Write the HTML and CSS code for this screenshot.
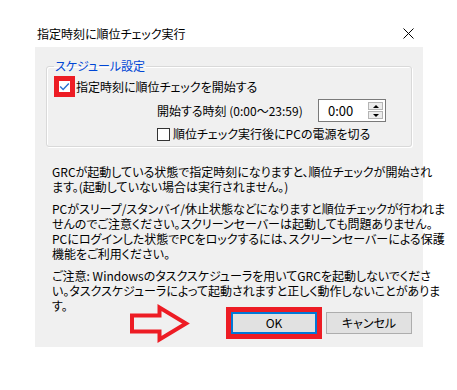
FILE: index.html
```html
<!DOCTYPE html>
<html lang="ja">
<head>
<meta charset="utf-8">
<title>指定時刻に順位チェック実行</title>
<link rel="stylesheet" href="styles.css">
</head>
<body>
<div class="window">
  <div class="titlebar">
    <span class="title">指定時刻に順位チェック実行</span>
    <svg class="close" viewBox="0 0 11 11" width="11" height="11"><path d="M0.5 0.5 L10.5 10.5 M10.5 0.5 L0.5 10.5" stroke="#000" stroke-width="1" fill="none"/></svg>
  </div>
  <div class="client">
    <fieldset class="group">
      <legend>スケジュール設定</legend>
      <div class="row r1">
        <span class="hl"><svg class="check" viewBox="0 0 11 11" width="11" height="11"><path d="M1.2 5.6 L4.1 8.4 L9.8 2.4" stroke="#2b6fd1" stroke-width="1.4" fill="none"/></svg></span>
        <span class="lbl">指定時刻に順位チェックを開始する</span>
      </div>
      <div class="row r2">
        <span class="time-lbl">開始する時刻 (0:00～23:59)</span>
        <div class="spin">
          <span class="val">0:00</span>
          <div class="spinbtns">
            <span class="sb"><span class="tri up"></span></span>
            <span class="sb"><span class="tri down"></span></span>
          </div>
        </div>
      </div>
      <div class="row r3">
        <span class="cb"></span>
        <span class="lbl">順位チェック実行後にPCの電源を切る</span>
      </div>
    </fieldset>
    <div class="notes">
      <p>GRCが起動している状態で指定時刻になりますと、順位チェックが開始され<br>ます。(起動していない場合は実行されません。)</p>
      <p>PCがスリープ/スタンバイ/休止状態などになりますと順位チェックが行われま<br>せんのでご注意ください。スクリーンセーバーは起動しても問題ありません。<br>PCにログインした状態でPCをロックするには、スクリーンセーバーによる保護<br>機能をご利用ください。</p>
      <p>ご注意: Windowsのタスクスケジューラを用いてGRCを起動しないでくださ<br>い。タスクスケジューラによって起動されますと正しく動作しないことがありま<br>す。</p>
    </div>
    <div class="buttons">
      <svg class="arrow" viewBox="0 0 64 40" width="64" height="40"><polygon points="4,12.5 31.5,12.5 31.5,4.5 58,20.5 31.5,36.5 31.5,28.5 4,28.5" fill="none" stroke="#ed1c24" stroke-width="4" stroke-linejoin="miter"/></svg>
      <span class="okwrap"><button class="btn ok">OK</button></span>
      <button class="btn cancel">キャンセル</button>
    </div>
  </div>
</div>
</body>
</html>
```
FILE: styles.css
```css
* { box-sizing: border-box; }
html, body { margin: 0; background: #fff; }
body {
  font-family: "Noto Sans CJK JP", "Noto Sans", sans-serif;
  font-size: 12px;
  color: #000;
  font-feature-settings: "palt";
  width: 457px;
  height: 390px;
  overflow: hidden;
}
.titlebar {
  display: flex;
  align-items: center;
  height: 47px;
  padding: 20px 43px 0 37px;
}
.title { line-height: 16px; white-space: nowrap; }
.close { margin-left: auto; display: block; }

.client {
  margin-left: 35px;
  width: 388px;
  height: 300px;
  background: #f0f0f0;
  padding: 11px 11px 0 11px;
}
.group {
  margin: 0;
  padding: 0 0 4px 0;
  width: 366px;
  border: 1px solid #d9d9d9;
  border-radius: 3px;
  box-shadow: 1px 1px 0 #fff, inset 1px 1px 0 #fff;
  min-width: 0;
}
.group legend {
  margin-left: 7px;
  padding: 0 1px;
  color: #0046d5;
  line-height: 16px;
}
.row { display: flex; align-items: center; white-space: nowrap; }
.r1 { margin: 2px 0 0 7px; }
.hl {
  width: 21px;
  height: 21px;
  border: 5px solid #ed1c24;
  background: #fff;
  display: flex;
}
.r1 .lbl { margin-left: 1px; line-height: 16px; }
.r2 { margin: 2px 0 0 110px; }
.time-lbl { width: 161px; flex: none; line-height: 16px; }
.spin {
  width: 68px;
  height: 23px;
  border: 1px solid #7a7a7a;
  background: #fff;
  display: flex;
  align-items: center;
  padding: 0 2px 0 9px;
}
.val { font-size: 13px; line-height: 16px; font-feature-settings: normal; }
.spinbtns { margin-left: auto; display: flex; flex-direction: column; gap: 1px; }
.sb {
  width: 15px;
  height: 8px;
  border: 1px solid #b4b4b4;
  background: #ececec;
  display: flex;
  align-items: center;
  justify-content: center;
}
.tri { width: 0; height: 0; border-left: 3px solid transparent; border-right: 3px solid transparent; }
.tri.up { border-bottom: 3px solid #000; }
.tri.down { border-top: 3px solid #000; }
.r3 { margin: 4px 0 0 110px; }
.cb {
  width: 13px;
  height: 13px;
  border: 1px solid #333;
  background: #fff;
  flex: none;
}
.r3 .lbl { margin-left: 3px; line-height: 16px; }

.notes { margin: 17px 0 0 6px; }
.notes p { margin: 0 0 7px; line-height: 15px; white-space: nowrap; }
.notes p:last-child { margin-bottom: 0; }

.buttons {
  display: flex;
  align-items: center;
  margin-top: -10px;
  padding-left: 82px;
}
.arrow { display: block; overflow: visible; }
.okwrap {
  margin-left: 34px;
  border: 5px solid #ed1c24;
  display: flex;
}
.btn {
  width: 86px;
  height: 22px;
  padding: 0;
  border: 1px solid #adadad;
  background: #e1e1e1;
  font: inherit;
  color: #000;
  line-height: 16px;
}
.btn.ok { border: 2px solid #0078d7; }
.cancel { margin-left: 4px; }
```
